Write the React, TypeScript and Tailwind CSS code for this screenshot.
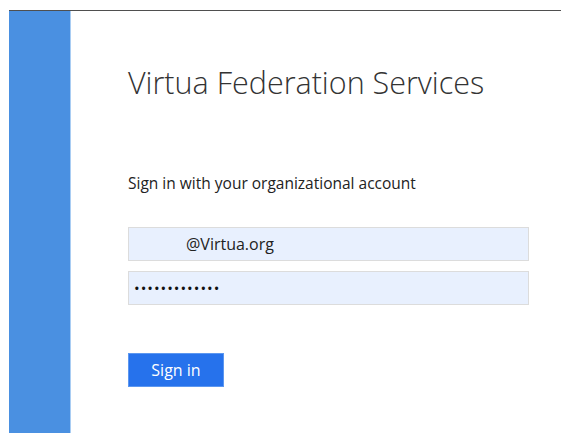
export default function App() {
  return (
    <div className="w-[561px] h-[433px] bg-white pl-[9px] pt-[10px] overflow-hidden">
      <div className="flex h-full border-t-[1px] border-[#4f4f4f]">
        <div className="w-[62px] shrink-0 bg-[#4a90e1] border-r border-[#a9cdf3]" />
        <div
          className="flex-1 pl-[57px] pt-[51px] text-[#333]"
          style={{ fontFamily: '"Open Sans", "Noto Sans", sans-serif' }}
        >
          <h1 className="text-[30.5px] font-light leading-[40px] text-[#333]">
            Virtua Federation Services
          </h1>
          <p className="mt-[71px] text-[15.5px] leading-[20px] text-[#222]">
            Sign in with your organizational account
          </p>
          <div className="mt-[34px] flex flex-col gap-[10px] w-[401px]">
            <div className="h-[34px] bg-[#e8f0fe] border border-[#dcdcdc] flex items-center pl-[57px] text-[16px] text-[#222]">
              @Virtua.org
            </div>
            <div className="h-[34px] bg-[#e8f0fe] border border-[#dcdcdc] flex items-center pl-[5px] text-[15px] text-[#111] tracking-[1px]">
              •••••••••••••
            </div>
          </div>
          <button className="mt-[48px] w-[96px] h-[34px] bg-[#2672ec] text-white text-[16px] border border-[#5c97f0]">
            Sign in
          </button>
        </div>
      </div>
    </div>
  );
}
